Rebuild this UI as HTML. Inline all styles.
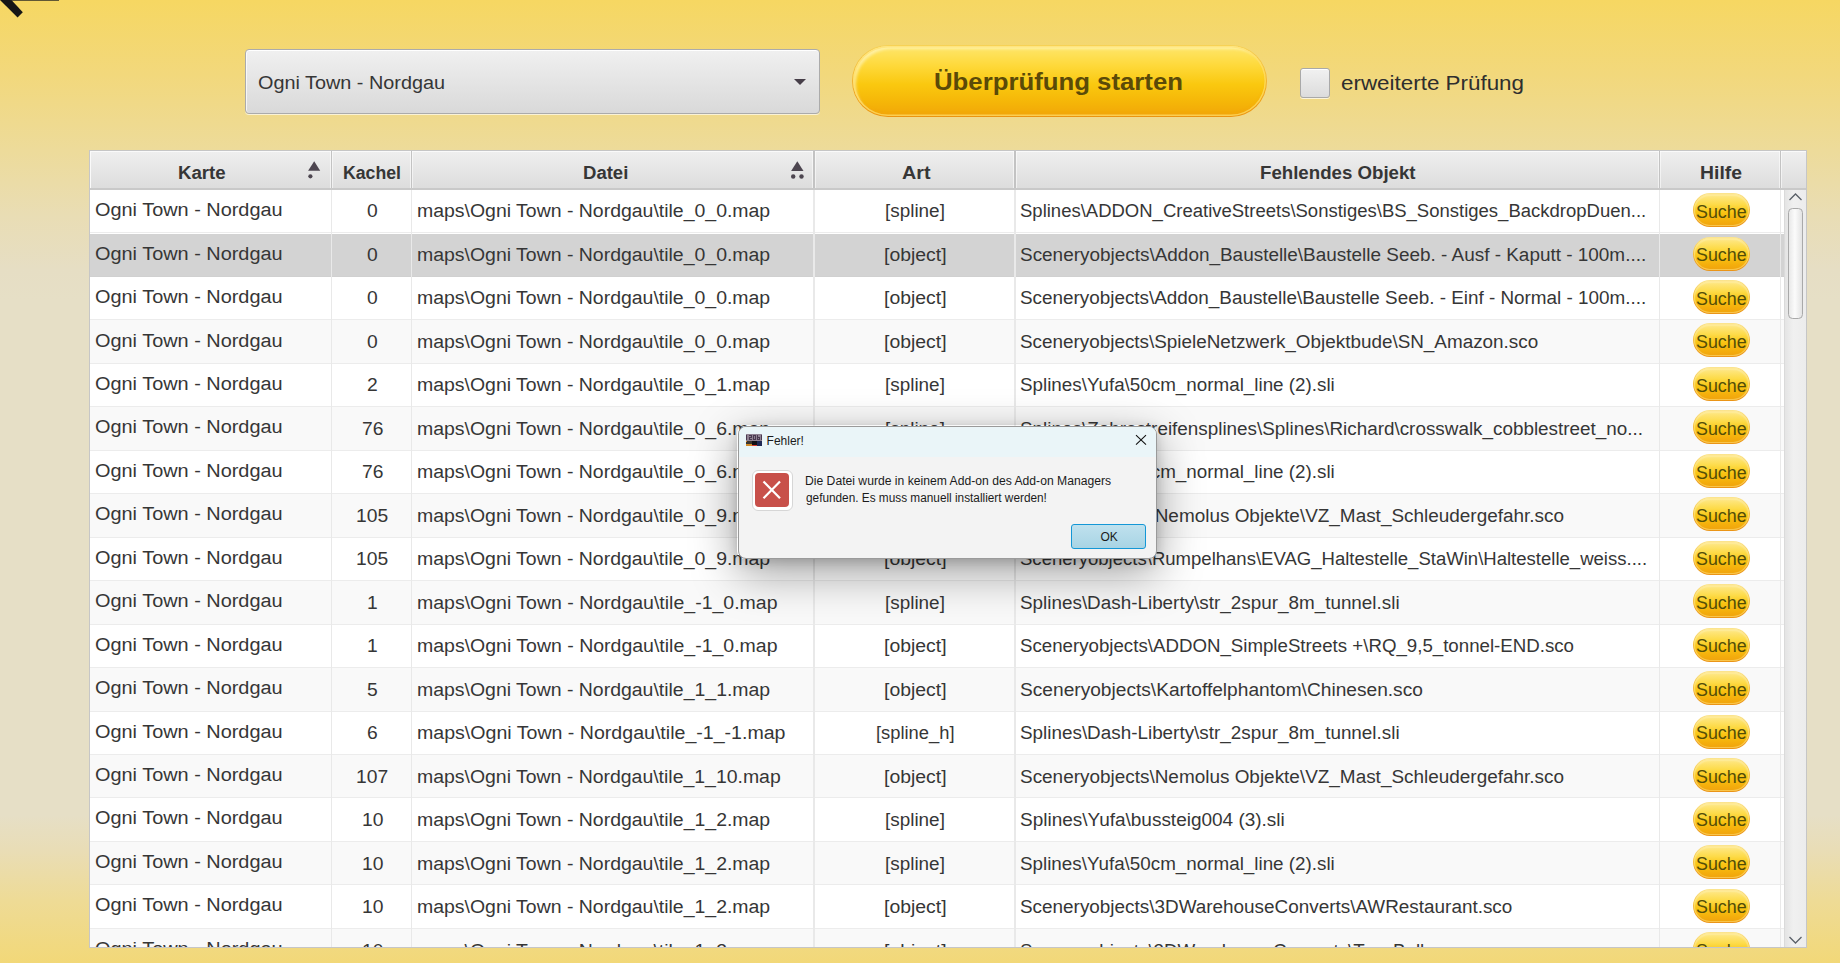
<!DOCTYPE html>
<html><head><meta charset="utf-8"><title>Check</title>
<style>
html,body{margin:0;padding:0;}
body{width:1840px;height:963px;overflow:hidden;position:relative;font-family:"Liberation Sans",sans-serif;color:#363636;
 background:linear-gradient(to bottom,#f6d762 0px,#f2d87c 75px,#eddb9a 150px,#e9ddb4 215px,#e6dec4 270px,#e6dfc6 300px,#e6dfc6 815px,#e9ddb6 850px,#eedb96 900px,#f2d878 963px);}
.t{position:absolute;white-space:pre;line-height:1;transform-origin:0 0;}
.abs{position:absolute;}
#combo{position:absolute;left:245px;top:49px;width:575px;height:65px;box-sizing:border-box;border:1px solid #ababab;border-radius:4px;
 background:linear-gradient(#f0f0f0,#d9d9d9);box-shadow:inset 0 1px 0 #fff,inset 1px 0 0 rgba(255,255,255,.7),0 1px 0 rgba(255,255,255,.65);}
#combo .arr{position:absolute;left:548px;top:29px;width:0;height:0;border-left:6.5px solid transparent;border-right:6.5px solid transparent;border-top:6.5px solid #463e48;}
#go{position:absolute;left:852px;top:45px;width:415px;height:72px;box-sizing:border-box;border-radius:36px;padding:1px;
 background:linear-gradient(#f7d256 0%,#f2b633 45%,#ee9c18 75%,#eb9410 100%);}
#go .in{width:100%;height:100%;border-radius:35px;background:linear-gradient(#fee66c 0%,#fed93a 28%,#fac80f 55%,#f5b608 80%,#f1a608 100%);
 box-shadow:inset 0 0 0 1.5px rgba(255,224,110,.7),inset 3px 3px 3px rgba(255,252,220,.55),inset 0 -2px 3px rgba(245,160,20,.35);}
#cb{position:absolute;left:1300px;top:68px;width:30px;height:30px;box-sizing:border-box;border:1.5px solid #a9a9a9;border-radius:3px;
 background:linear-gradient(#f1f1f1,#dcdcdc);box-shadow:inset 0 1px 0 #fff,0 1px 0 rgba(255,255,255,.7);}
#clip{position:absolute;left:0;top:0;width:1840px;height:947px;overflow:hidden;}
#tbl{position:absolute;left:89px;top:150px;width:1718px;height:798px;box-sizing:border-box;border:1px solid #c6c6c6;background:#fff;}
#hdr{position:absolute;left:90px;top:151px;width:1716px;height:39px;background:linear-gradient(#efefef,#dcdcdc);
 box-shadow:inset 0 1px 0 #fafafa,inset 1px 0 0 #fafafa;border-bottom:0;}
#hdrb{position:absolute;left:90px;top:188px;width:1716px;height:2px;background:#c9c9c9;}
.hc{position:absolute;top:151px;width:1.5px;height:37px;background:#c3c3c3;box-shadow:-1px 0 0 rgba(255,255,255,.55),1px 0 0 rgba(255,255,255,.55);}
#rows{position:absolute;left:90px;top:150px;width:1694px;height:797px;overflow:hidden;}
.row{position:absolute;left:0;width:1694px;height:43.4px;box-sizing:border-box;border-bottom:1.5px solid #ececec;}
.wht{background:#fff;}
.alt{background:#f9f9f9;}
.sel{background:#d3d3d3;border-bottom-color:#d0d0d0;}
.vc{position:absolute;top:190px;width:1.6px;height:757px;background:#e9e9e9;}
.suche{position:absolute;left:1692.5px;width:57.5px;height:34px;box-sizing:border-box;border-radius:17px;padding:1px;
 background:linear-gradient(#fbe590 0%,#f6c746 40%,#eea024 75%,#ea9416 100%);}
.suche i{display:block;width:100%;height:100%;border-radius:16px;background:linear-gradient(#fee98e 0%,#fddb48 33%,#f9c412 58%,#f4ad0c 85%,#f0a30e 100%);
 box-shadow:inset 0 0 0 1px rgba(255,222,120,.55),inset 0 1px 2px rgba(255,255,230,.7);}
#sb{position:absolute;left:1784px;top:190px;width:22px;height:757px;box-sizing:border-box;background:linear-gradient(to right,#e4e4e4,#f0f0f0 40%,#ececec);border-left:1px solid #dadada;}
#thumb{position:absolute;left:1788px;top:208px;width:15px;height:111px;box-sizing:border-box;border:1.5px solid #a9a9a9;border-radius:4.5px;
 background:linear-gradient(to right,#e8e8e8,#fbfbfb 45%,#e3e3e3);}
/* dialog */
#dlgsh{position:absolute;left:737px;top:425px;width:420px;height:134px;border-radius:8px;box-shadow:0 14px 46px rgba(0,0,0,.38),0 3px 12px rgba(0,0,0,.16);}
#dlg{position:absolute;left:737.5px;top:425.5px;width:419px;height:133px;box-sizing:border-box;border-radius:8px;border:1px solid #9a9a9a;background:#f3f3f3;overflow:hidden;}
#dlg .tb{position:absolute;left:0;top:0;width:100%;height:30px;background:#eaf5f8;}
.dt{position:absolute;white-space:pre;line-height:1;transform-origin:0 0;color:#1b1b1b;font-size:12px;}
#ok{position:absolute;left:1071px;top:524px;width:75px;height:25px;box-sizing:border-box;border:1.5px solid #1497d6;border-radius:3px;background:linear-gradient(#bfe1ee,#a8d4e4);}
#erricon{position:absolute;left:751.5px;top:469.5px;width:41px;height:41px;box-sizing:border-box;border:1px solid #d6d6d6;border-radius:6px;background:#fff;}
#errred{position:absolute;left:755px;top:473px;width:34px;height:34px;border-radius:4px;background:#c8504a;}
</style></head>
<body>
<svg class="abs" style="left:0;top:0" width="70" height="24" viewBox="0 0 70 24">
  <polygon points="0,-1 10.5,-1 22.8,12.3 17.6,17.6 0,0" fill="#161616"/>
  <rect x="10" y="-4" width="49" height="4.7" fill="#222"/>
</svg>
<div id="combo"><div class="arr"></div></div>
<div id="go"><div class="in"></div></div>
<div id="cb"></div>

<div id="tbl"></div>
<div id="rows">
<div class="row wht" style="top:40.0px"></div>
<div class="row sel" style="top:83.5px"></div>
<div class="row wht" style="top:126.9px"></div>
<div class="row alt" style="top:170.4px"></div>
<div class="row wht" style="top:213.9px"></div>
<div class="row alt" style="top:257.4px"></div>
<div class="row wht" style="top:300.8px"></div>
<div class="row alt" style="top:344.3px"></div>
<div class="row wht" style="top:387.8px"></div>
<div class="row alt" style="top:431.2px"></div>
<div class="row wht" style="top:474.7px"></div>
<div class="row alt" style="top:518.2px"></div>
<div class="row wht" style="top:561.6px"></div>
<div class="row alt" style="top:605.1px"></div>
<div class="row wht" style="top:648.6px"></div>
<div class="row alt" style="top:692.0px"></div>
<div class="row wht" style="top:735.5px"></div>
<div class="row alt" style="top:779.0px"></div>
</div>
<div id="hdr"></div>
<div id="hdrb"></div>
<div class="hc" style="left:330.5px"></div>
<div class="hc" style="left:410.7px"></div>
<div class="hc" style="left:813.2px"></div>
<div class="hc" style="left:1014.3px"></div>
<div class="hc" style="left:1658.6px"></div>
<div class="hc" style="left:1779.5px"></div>
<div class="vc" style="left:330.5px"></div>
<div class="vc" style="left:410.7px"></div>
<div class="vc" style="left:813.2px"></div>
<div class="vc" style="left:1014.3px"></div>
<div class="vc" style="left:1658.6px"></div>
<div class="vc" style="left:1779.5px"></div>
<div id="sb"></div>
<div id="thumb"></div>
<svg class="abs" style="left:1784px;top:190px" width="22" height="16" viewBox="0 0 22 16"><polyline points="5.5,10 11.5,4 17.5,10" fill="none" stroke="#5a6068" stroke-width="1.25"/></svg>
<svg class="abs" style="left:1784px;top:930px" width="22" height="17" viewBox="0 0 22 17"><polyline points="5.5,7 11.5,13 17.5,7" fill="none" stroke="#5a6068" stroke-width="1.25"/></svg>
<!-- sort arrows -->
<svg class="abs" style="left:300px;top:155px" width="30" height="30" viewBox="0 0 30 30">
  <polygon points="14.2,6.2 20.2,15.8 8.1,15.8" fill="#4d4650"/><circle cx="10.4" cy="21.3" r="2.1" fill="#4d4650"/></svg>
<svg class="abs" style="left:783px;top:155px" width="30" height="30" viewBox="0 0 30 30">
  <polygon points="14.3,6.2 20.5,16 8.1,16" fill="#4d4650"/><circle cx="10.2" cy="21.5" r="2.2" fill="#4d4650"/><circle cx="18.5" cy="21.5" r="2.2" fill="#4d4650"/></svg>
<div id="clip">
<div class="suche" style="top:193.0px"><i></i></div>
<div class="suche" style="top:236.5px"><i></i></div>
<div class="suche" style="top:279.9px"><i></i></div>
<div class="suche" style="top:323.4px"><i></i></div>
<div class="suche" style="top:366.9px"><i></i></div>
<div class="suche" style="top:410.4px"><i></i></div>
<div class="suche" style="top:453.8px"><i></i></div>
<div class="suche" style="top:497.3px"><i></i></div>
<div class="suche" style="top:540.8px"><i></i></div>
<div class="suche" style="top:584.2px"><i></i></div>
<div class="suche" style="top:627.7px"><i></i></div>
<div class="suche" style="top:671.2px"><i></i></div>
<div class="suche" style="top:714.6px"><i></i></div>
<div class="suche" style="top:758.1px"><i></i></div>
<div class="suche" style="top:801.6px"><i></i></div>
<div class="suche" style="top:845.0px"><i></i></div>
<div class="suche" style="top:888.5px"><i></i></div>
<div class="suche" style="top:932.0px"><i></i></div>
<div class="t" style="left:95.2px;top:201.2px;font-size:18px;transform:scaleX(1.1051);">Ogni Town - Nordgau</div>
<div class="t" style="left:366.8px;top:202.3px;font-size:18px;transform:scaleX(1.0700);">0</div>
<div class="t" style="left:417.2px;top:202.3px;font-size:18px;transform:scaleX(1.0806);">maps\Ogni Town - Nordgau\tile_0_0.map</div>
<div class="t" style="left:885.0px;top:202.3px;font-size:18px;transform:scaleX(1.0500);">[spline]</div>
<div class="t" style="left:1020.4px;top:202.3px;font-size:18px;transform:scaleX(1.0277);">Splines\ADDON_CreativeStreets\Sonstiges\BS_Sonstiges_BackdropDuen...</div>
<div class="t" style="left:1696.1px;top:202.7px;font-size:18px;transform:scaleX(0.9912);color:#524d08;">Suche</div>
<div class="t" style="left:95.2px;top:244.6px;font-size:18px;transform:scaleX(1.1051);">Ogni Town - Nordgau</div>
<div class="t" style="left:366.8px;top:245.8px;font-size:18px;transform:scaleX(1.0700);">0</div>
<div class="t" style="left:417.2px;top:245.8px;font-size:18px;transform:scaleX(1.0806);">maps\Ogni Town - Nordgau\tile_0_0.map</div>
<div class="t" style="left:883.7px;top:245.8px;font-size:18px;transform:scaleX(1.0784);">[object]</div>
<div class="t" style="left:1020.4px;top:245.8px;font-size:18px;transform:scaleX(1.0518);">Sceneryobjects\Addon_Baustelle\Baustelle Seeb. - Ausf - Kaputt - 100m....</div>
<div class="t" style="left:1696.1px;top:246.2px;font-size:18px;transform:scaleX(0.9912);color:#524d08;">Suche</div>
<div class="t" style="left:95.2px;top:288.1px;font-size:18px;transform:scaleX(1.1051);">Ogni Town - Nordgau</div>
<div class="t" style="left:366.8px;top:289.3px;font-size:18px;transform:scaleX(1.0700);">0</div>
<div class="t" style="left:417.2px;top:289.3px;font-size:18px;transform:scaleX(1.0806);">maps\Ogni Town - Nordgau\tile_0_0.map</div>
<div class="t" style="left:883.7px;top:289.3px;font-size:18px;transform:scaleX(1.0784);">[object]</div>
<div class="t" style="left:1020.4px;top:289.3px;font-size:18px;transform:scaleX(1.0484);">Sceneryobjects\Addon_Baustelle\Baustelle Seeb. - Einf - Normal - 100m....</div>
<div class="t" style="left:1696.1px;top:289.6px;font-size:18px;transform:scaleX(0.9912);color:#524d08;">Suche</div>
<div class="t" style="left:95.2px;top:331.5px;font-size:18px;transform:scaleX(1.1051);">Ogni Town - Nordgau</div>
<div class="t" style="left:366.8px;top:332.8px;font-size:18px;transform:scaleX(1.0700);">0</div>
<div class="t" style="left:417.2px;top:332.8px;font-size:18px;transform:scaleX(1.0806);">maps\Ogni Town - Nordgau\tile_0_0.map</div>
<div class="t" style="left:883.7px;top:332.8px;font-size:18px;transform:scaleX(1.0784);">[object]</div>
<div class="t" style="left:1020.4px;top:332.8px;font-size:18px;transform:scaleX(1.0484);">Sceneryobjects\SpieleNetzwerk_Objektbude\SN_Amazon.sco</div>
<div class="t" style="left:1696.1px;top:333.1px;font-size:18px;transform:scaleX(0.9912);color:#524d08;">Suche</div>
<div class="t" style="left:95.2px;top:374.9px;font-size:18px;transform:scaleX(1.1051);">Ogni Town - Nordgau</div>
<div class="t" style="left:366.8px;top:376.3px;font-size:18px;transform:scaleX(1.0700);">2</div>
<div class="t" style="left:417.2px;top:376.3px;font-size:18px;transform:scaleX(1.0806);">maps\Ogni Town - Nordgau\tile_0_1.map</div>
<div class="t" style="left:885.0px;top:376.3px;font-size:18px;transform:scaleX(1.0500);">[spline]</div>
<div class="t" style="left:1020.4px;top:376.3px;font-size:18px;transform:scaleX(1.0453);">Splines\Yufa\50cm_normal_line (2).sli</div>
<div class="t" style="left:1696.1px;top:376.6px;font-size:18px;transform:scaleX(0.9912);color:#524d08;">Suche</div>
<div class="t" style="left:95.2px;top:418.4px;font-size:18px;transform:scaleX(1.1051);">Ogni Town - Nordgau</div>
<div class="t" style="left:361.5px;top:419.8px;font-size:18px;transform:scaleX(1.0700);">76</div>
<div class="t" style="left:417.2px;top:419.8px;font-size:18px;transform:scaleX(1.0806);">maps\Ogni Town - Nordgau\tile_0_6.map</div>
<div class="t" style="left:885.0px;top:419.8px;font-size:18px;transform:scaleX(1.0500);">[spline]</div>
<div class="t" style="left:1020.4px;top:419.8px;font-size:18px;transform:scaleX(1.0483);">Splines\Zebrastreifensplines\Splines\Richard\crosswalk_cobblestreet_no...</div>
<div class="t" style="left:1696.1px;top:420.0px;font-size:18px;transform:scaleX(0.9912);color:#524d08;">Suche</div>
<div class="t" style="left:95.2px;top:461.8px;font-size:18px;transform:scaleX(1.1051);">Ogni Town - Nordgau</div>
<div class="t" style="left:361.5px;top:463.3px;font-size:18px;transform:scaleX(1.0700);">76</div>
<div class="t" style="left:417.2px;top:463.3px;font-size:18px;transform:scaleX(1.0806);">maps\Ogni Town - Nordgau\tile_0_6.map</div>
<div class="t" style="left:885.0px;top:463.3px;font-size:18px;transform:scaleX(1.0500);">[spline]</div>
<div class="t" style="left:1020.4px;top:463.3px;font-size:18px;transform:scaleX(1.0453);">Splines\Yufa\50cm_normal_line (2).sli</div>
<div class="t" style="left:1696.1px;top:463.5px;font-size:18px;transform:scaleX(0.9912);color:#524d08;">Suche</div>
<div class="t" style="left:95.2px;top:505.3px;font-size:18px;transform:scaleX(1.1051);">Ogni Town - Nordgau</div>
<div class="t" style="left:356.1px;top:506.8px;font-size:18px;transform:scaleX(1.0700);">105</div>
<div class="t" style="left:417.2px;top:506.8px;font-size:18px;transform:scaleX(1.0806);">maps\Ogni Town - Nordgau\tile_0_9.map</div>
<div class="t" style="left:883.7px;top:506.8px;font-size:18px;transform:scaleX(1.0784);">[object]</div>
<div class="t" style="left:1020.4px;top:506.8px;font-size:18px;transform:scaleX(1.0517);">Sceneryobjects\Nemolus Objekte\VZ_Mast_Schleudergefahr.sco</div>
<div class="t" style="left:1696.1px;top:507.0px;font-size:18px;transform:scaleX(0.9912);color:#524d08;">Suche</div>
<div class="t" style="left:95.2px;top:548.7px;font-size:18px;transform:scaleX(1.1051);">Ogni Town - Nordgau</div>
<div class="t" style="left:356.1px;top:550.3px;font-size:18px;transform:scaleX(1.0700);">105</div>
<div class="t" style="left:417.2px;top:550.3px;font-size:18px;transform:scaleX(1.0806);">maps\Ogni Town - Nordgau\tile_0_9.map</div>
<div class="t" style="left:883.7px;top:550.3px;font-size:18px;transform:scaleX(1.0784);">[object]</div>
<div class="t" style="left:1020.4px;top:550.3px;font-size:18px;transform:scaleX(1.0298);">Sceneryobjects\Rumpelhans\EVAG_Haltestelle_StaWin\Haltestelle_weiss....</div>
<div class="t" style="left:1696.1px;top:550.4px;font-size:18px;transform:scaleX(0.9912);color:#524d08;">Suche</div>
<div class="t" style="left:95.2px;top:592.1px;font-size:18px;transform:scaleX(1.1051);">Ogni Town - Nordgau</div>
<div class="t" style="left:366.8px;top:593.8px;font-size:18px;transform:scaleX(1.0700);">1</div>
<div class="t" style="left:417.2px;top:593.8px;font-size:18px;transform:scaleX(1.0831);">maps\Ogni Town - Nordgau\tile_-1_0.map</div>
<div class="t" style="left:885.0px;top:593.8px;font-size:18px;transform:scaleX(1.0500);">[spline]</div>
<div class="t" style="left:1020.4px;top:593.8px;font-size:18px;transform:scaleX(1.0481);">Splines\Dash-Liberty\str_2spur_8m_tunnel.sli</div>
<div class="t" style="left:1696.1px;top:593.9px;font-size:18px;transform:scaleX(0.9912);color:#524d08;">Suche</div>
<div class="t" style="left:95.2px;top:635.6px;font-size:18px;transform:scaleX(1.1051);">Ogni Town - Nordgau</div>
<div class="t" style="left:366.8px;top:637.3px;font-size:18px;transform:scaleX(1.0700);">1</div>
<div class="t" style="left:417.2px;top:637.3px;font-size:18px;transform:scaleX(1.0831);">maps\Ogni Town - Nordgau\tile_-1_0.map</div>
<div class="t" style="left:883.7px;top:637.3px;font-size:18px;transform:scaleX(1.0784);">[object]</div>
<div class="t" style="left:1020.4px;top:637.3px;font-size:18px;transform:scaleX(1.0380);">Sceneryobjects\ADDON_SimpleStreets +\RQ_9,5_tonnel-END.sco</div>
<div class="t" style="left:1696.1px;top:637.4px;font-size:18px;transform:scaleX(0.9912);color:#524d08;">Suche</div>
<div class="t" style="left:95.2px;top:679.0px;font-size:18px;transform:scaleX(1.1051);">Ogni Town - Nordgau</div>
<div class="t" style="left:366.8px;top:680.8px;font-size:18px;transform:scaleX(1.0700);">5</div>
<div class="t" style="left:417.2px;top:680.8px;font-size:18px;transform:scaleX(1.0806);">maps\Ogni Town - Nordgau\tile_1_1.map</div>
<div class="t" style="left:883.7px;top:680.8px;font-size:18px;transform:scaleX(1.0784);">[object]</div>
<div class="t" style="left:1020.4px;top:680.8px;font-size:18px;transform:scaleX(1.0634);">Sceneryobjects\Kartoffelphantom\Chinesen.sco</div>
<div class="t" style="left:1696.1px;top:680.9px;font-size:18px;transform:scaleX(0.9912);color:#524d08;">Suche</div>
<div class="t" style="left:95.2px;top:722.5px;font-size:18px;transform:scaleX(1.1051);">Ogni Town - Nordgau</div>
<div class="t" style="left:366.8px;top:724.3px;font-size:18px;transform:scaleX(1.0700);">6</div>
<div class="t" style="left:417.2px;top:724.3px;font-size:18px;transform:scaleX(1.0875);">maps\Ogni Town - Nordgau\tile_-1_-1.map</div>
<div class="t" style="left:875.8px;top:724.3px;font-size:18px;transform:scaleX(1.0187);">[spline_h]</div>
<div class="t" style="left:1020.4px;top:724.3px;font-size:18px;transform:scaleX(1.0481);">Splines\Dash-Liberty\str_2spur_8m_tunnel.sli</div>
<div class="t" style="left:1696.1px;top:724.3px;font-size:18px;transform:scaleX(0.9912);color:#524d08;">Suche</div>
<div class="t" style="left:95.2px;top:765.9px;font-size:18px;transform:scaleX(1.1051);">Ogni Town - Nordgau</div>
<div class="t" style="left:356.1px;top:767.8px;font-size:18px;transform:scaleX(1.0700);">107</div>
<div class="t" style="left:417.2px;top:767.8px;font-size:18px;transform:scaleX(1.0797);">maps\Ogni Town - Nordgau\tile_1_10.map</div>
<div class="t" style="left:883.7px;top:767.8px;font-size:18px;transform:scaleX(1.0784);">[object]</div>
<div class="t" style="left:1020.4px;top:767.8px;font-size:18px;transform:scaleX(1.0517);">Sceneryobjects\Nemolus Objekte\VZ_Mast_Schleudergefahr.sco</div>
<div class="t" style="left:1696.1px;top:767.8px;font-size:18px;transform:scaleX(0.9912);color:#524d08;">Suche</div>
<div class="t" style="left:95.2px;top:809.3px;font-size:18px;transform:scaleX(1.1051);">Ogni Town - Nordgau</div>
<div class="t" style="left:361.5px;top:811.3px;font-size:18px;transform:scaleX(1.0700);">10</div>
<div class="t" style="left:417.2px;top:811.3px;font-size:18px;transform:scaleX(1.0806);">maps\Ogni Town - Nordgau\tile_1_2.map</div>
<div class="t" style="left:885.0px;top:811.3px;font-size:18px;transform:scaleX(1.0500);">[spline]</div>
<div class="t" style="left:1020.4px;top:811.3px;font-size:18px;transform:scaleX(1.0543);">Splines\Yufa\bussteig004 (3).sli</div>
<div class="t" style="left:1696.1px;top:811.3px;font-size:18px;transform:scaleX(0.9912);color:#524d08;">Suche</div>
<div class="t" style="left:95.2px;top:852.8px;font-size:18px;transform:scaleX(1.1051);">Ogni Town - Nordgau</div>
<div class="t" style="left:361.5px;top:854.8px;font-size:18px;transform:scaleX(1.0700);">10</div>
<div class="t" style="left:417.2px;top:854.8px;font-size:18px;transform:scaleX(1.0806);">maps\Ogni Town - Nordgau\tile_1_2.map</div>
<div class="t" style="left:885.0px;top:854.8px;font-size:18px;transform:scaleX(1.0500);">[spline]</div>
<div class="t" style="left:1020.4px;top:854.8px;font-size:18px;transform:scaleX(1.0453);">Splines\Yufa\50cm_normal_line (2).sli</div>
<div class="t" style="left:1696.1px;top:854.7px;font-size:18px;transform:scaleX(0.9912);color:#524d08;">Suche</div>
<div class="t" style="left:95.2px;top:896.2px;font-size:18px;transform:scaleX(1.1051);">Ogni Town - Nordgau</div>
<div class="t" style="left:361.5px;top:898.3px;font-size:18px;transform:scaleX(1.0700);">10</div>
<div class="t" style="left:417.2px;top:898.3px;font-size:18px;transform:scaleX(1.0806);">maps\Ogni Town - Nordgau\tile_1_2.map</div>
<div class="t" style="left:883.7px;top:898.3px;font-size:18px;transform:scaleX(1.0784);">[object]</div>
<div class="t" style="left:1020.4px;top:898.3px;font-size:18px;transform:scaleX(1.0500);">Sceneryobjects\3DWarehouseConverts\AWRestaurant.sco</div>
<div class="t" style="left:1696.1px;top:898.2px;font-size:18px;transform:scaleX(0.9912);color:#524d08;">Suche</div>
<div class="t" style="left:95.2px;top:939.7px;font-size:18px;transform:scaleX(1.1051);">Ogni Town - Nordgau</div>
<div class="t" style="left:361.5px;top:941.8px;font-size:18px;transform:scaleX(1.0700);">10</div>
<div class="t" style="left:417.2px;top:941.8px;font-size:18px;transform:scaleX(1.0806);">maps\Ogni Town - Nordgau\tile_1_3.map</div>
<div class="t" style="left:883.7px;top:941.8px;font-size:18px;transform:scaleX(1.0784);">[object]</div>
<div class="t" style="left:1020.4px;top:941.8px;font-size:18px;transform:scaleX(1.0432);">Sceneryobjects\3DWarehouseConverts\TacoBell.sco</div>
<div class="t" style="left:1696.1px;top:941.7px;font-size:18px;transform:scaleX(0.9912);color:#524d08;">Suche</div>
<div class="t" style="left:178.2px;top:164.3px;font-size:18px;font-weight:700;transform:scaleX(1.0363);">Karte</div>
<div class="t" style="left:342.6px;top:164.3px;font-size:18px;font-weight:700;transform:scaleX(0.9825);">Kachel</div>
<div class="t" style="left:582.9px;top:164.3px;font-size:18px;font-weight:700;transform:scaleX(1.0292);">Datei</div>
<div class="t" style="left:902.0px;top:164.3px;font-size:18px;font-weight:700;transform:scaleX(1.0962);">Art</div>
<div class="t" style="left:1260.3px;top:164.3px;font-size:18px;font-weight:700;transform:scaleX(1.0370);">Fehlendes Objekt</div>
<div class="t" style="left:1700.0px;top:164.3px;font-size:18px;font-weight:700;transform:scaleX(1.0765);">Hilfe</div>
<div class="t" style="left:257.6px;top:74.2px;font-size:18px;transform:scaleX(1.1015);">Ogni Town - Nordgau</div>
<div class="t" style="left:934.3px;top:70.4px;font-size:24px;font-weight:700;transform:scaleX(1.0732);color:#5b4a08;">Überprüfung starten</div>
<div class="t" style="left:1341.0px;top:71.7px;font-size:21px;transform:scaleX(1.0665);color:#2e2e2e;">erweiterte Prüfung</div>
</div>

<div id="dlgsh"></div>
<div id="dlg"><div class="tb"></div></div>
<svg class="abs" style="left:746px;top:434px" width="16" height="12" viewBox="0 0 16 12" shape-rendering="crispEdges">
  <rect x="0" y="0" width="16" height="7" fill="#8f8292"/>
  <rect x="0" y="1" width="1" height="5" fill="#4a3a50"/>
  <rect x="3" y="1" width="3" height="1" fill="#4a3a50"/><rect x="5" y="2" width="1" height="2" fill="#4a3a50"/><rect x="3" y="3" width="3" height="1" fill="#4a3a50"/><rect x="3" y="4" width="1" height="1" fill="#4a3a50"/><rect x="3" y="5" width="3" height="1" fill="#4a3a50"/>
  <rect x="7" y="1" width="3" height="1" fill="#4a3a50"/><rect x="7" y="2" width="1" height="3" fill="#4a3a50"/><rect x="9" y="2" width="1" height="3" fill="#4a3a50"/><rect x="7" y="5" width="3" height="1" fill="#4a3a50"/>
  <rect x="11" y="1" width="1" height="5" fill="#4a3a50"/><rect x="12" y="3" width="2" height="1" fill="#4a3a50"/><rect x="13" y="4" width="1" height="2" fill="#4a3a50"/><rect x="12" y="5" width="1" height="1" fill="#4a3a50"/>
  <rect x="15" y="1" width="1" height="5" fill="#4a3a50"/>
  <rect x="0" y="7" width="6" height="3" fill="#3a3630"/><rect x="0" y="7" width="1" height="1" fill="#e09030"/>
  <rect x="6" y="7" width="5" height="4" fill="#101014"/>
  <rect x="11" y="7" width="5" height="5" fill="#1f2a55"/>
  <rect x="0" y="10" width="6" height="2" fill="#d08a28"/>
  <rect x="6" y="11" width="5" height="1" fill="#d83a30"/>
</svg>
<div class="dt" style="left:766.6px;top:434.6px;font-size:12px">Fehler!</div>
<svg class="abs" style="left:1130px;top:430px" width="22" height="20" viewBox="0 0 22 20"><path d="M6,5.2 L16,14.7 M16,5.2 L6,14.7" stroke="#111" stroke-width="1.1" fill="none"/></svg>
<div id="erricon"></div>
<div id="errred"></div>
<svg class="abs" style="left:755px;top:473px" width="34" height="34" viewBox="0 0 34 34"><path d="M8.5,8.5 L25,25.3 M25,8.5 L8.5,25.3" stroke="#fff" stroke-width="2.2" fill="none"/></svg>
<div class="dt" style="left:805.4px;top:474.7px;transform:scaleX(1.013)">Die Datei wurde in keinem Add-on des Add-on Managers</div>
<div class="dt" style="left:806.4px;top:491.7px;transform:scaleX(0.984)">gefunden. Es muss manuell installiert werden!</div>
<div id="ok"></div>
<div class="dt" style="left:1100.5px;top:530.6px">OK</div>
</body></html>
